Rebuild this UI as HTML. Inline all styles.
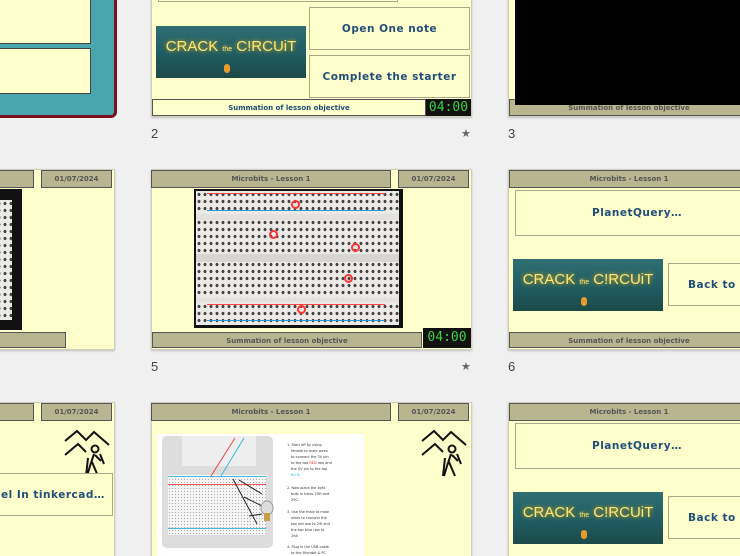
<!DOCTYPE html>
<html style="width:740px;height:556px;overflow:hidden"><head><meta charset="utf-8"><style>
*{margin:0;padding:0;box-sizing:border-box}
body{width:740px;height:556px;background:#f0f0f0;position:relative;overflow:hidden;font-family:"DejaVu Sans","Liberation Sans",sans-serif}
.a{position:absolute}
.sl{position:absolute;background:#ffffcc;border:1px solid #cfcfb8;box-shadow:0 1px 2px rgba(0,0,0,.2);overflow:hidden}
.hd{position:absolute;background:#b8b590;border:1px solid #555;color:#555;font-size:7px;font-weight:bold;text-align:center;line-height:16px}
.bx{position:absolute;border:1px solid #aaa68a;background:#ffffcc;color:#1f4e79;font-weight:bold;font-size:10.5px;display:flex;align-items:center;justify-content:center;letter-spacing:.5px}
.tm{position:absolute;background:#111;color:#3ed13e;font-family:"DejaVu Sans Mono",monospace;font-size:13px;line-height:20px;text-align:center}
.ck{position:absolute;background:linear-gradient(#2f6f74,#1f5a60 60%,#1c4a48);overflow:hidden}
.ck span{position:absolute;top:12px;left:0;width:100%;text-align:center;color:#f8e87a;font-family:"Liberation Sans Narrow","Liberation Sans",sans-serif;font-size:15px;text-shadow:0 0 4px #ffb400;letter-spacing:0}
.ck i{position:absolute;left:68px;bottom:5px;width:6px;height:9px;border-radius:3px;background:#e89a2a}
.num{position:absolute;font-size:13px;color:#444;font-family:"Liberation Sans",sans-serif}
.star{position:absolute;font-size:11px;color:#666}
.bb{position:absolute;background:#111}
.bbi{position:absolute;background:#eceae6;background-image:radial-gradient(#444 30%,transparent 38%);background-size:6px 7px}
</style></head><body>

<!-- slide 1 -->
<div class="a" style="left:-200px;top:-60px;width:317px;height:178px;background:#4aa7b0;border:3px solid #7a1020;border-radius:6px"></div>
<div class="a" style="left:-10px;top:-10px;width:101px;height:54px;background:#ffffcc;border:1px solid #444"></div>
<div class="a" style="left:-10px;top:48px;width:101px;height:46px;background:#ffffcc;border:1px solid #444"></div>

<!-- slide 2 -->
<div class="sl" style="left:151px;top:-64px;width:321px;height:181px"></div>
<div class="a" style="left:158px;top:-10px;width:240px;height:12px;border:1px solid #aaa68a"></div>
<div class="ck" style="left:156px;top:26px;width:150px;height:52px"><span>CRACK <small style="font-size:7px">the</small> C!RCUiT</span><i></i></div>
<div class="bx" style="left:309px;top:7px;width:161px;height:43px">Open One note</div>
<div class="bx" style="left:309px;top:55px;width:161px;height:43px">Complete the starter</div>
<div class="hd" style="left:152px;top:99px;width:274px;height:17px;background:#ffffcc;color:#1f4e79">Summation of lesson objective</div>
<div class="tm" style="left:426px;top:99px;width:45px;height:17px;line-height:17px">04:00</div>
<div class="num" style="left:151px;top:126px">2</div>
<div class="star" style="left:461px;top:127px">★</div>

<!-- slide 3 -->
<div class="sl" style="left:508px;top:-64px;width:260px;height:181px"></div>
<div class="hd" style="left:509px;top:99px;width:240px;height:17px">Summation of lesson objective</div>
<div class="a" style="left:515px;top:0;width:230px;height:105px;background:#000"></div>
<div class="num" style="left:508px;top:126px">3</div>

<!-- row 2 A -->
<div class="sl" style="left:-210px;top:169px;width:325px;height:181px"></div>
<div class="hd" style="left:-10px;top:170px;width:44px;height:18px"></div>
<div class="hd" style="left:41px;top:170px;width:71px;height:18px">01/07/2024</div>
<div class="bb" style="left:-10px;top:189px;width:32px;height:141px"></div>
<div class="bbi" style="left:-10px;top:200px;width:22px;height:120px"></div>
<div class="hd" style="left:-10px;top:332px;width:76px;height:16px"></div>

<!-- row 2 B -->
<div class="sl" style="left:151px;top:169px;width:321px;height:181px"></div>
<div class="hd" style="left:151px;top:170px;width:240px;height:18px">Microbits - Lesson 1</div>
<div class="hd" style="left:398px;top:170px;width:71px;height:18px">01/07/2024</div>
<div class="bb" style="left:194px;top:189px;width:209px;height:139px"></div>
<div class="bbi" style="left:196px;top:191px;width:203px;height:134px"></div>
<div class="a" style="left:196px;top:214px;width:203px;height:6px;background:#e4e2de"></div>
<div class="a" style="left:196px;top:254px;width:203px;height:8px;background:#d8d6d2"></div>
<div class="a" style="left:196px;top:298px;width:203px;height:4px;background:#e4e2de"></div>
<div class="a" style="left:207px;top:193px;width:178px;height:1px;background:#f44"></div>
<div class="a" style="left:207px;top:210px;width:178px;height:1px;background:#29c"></div>
<div class="a" style="left:207px;top:304px;width:178px;height:1px;background:#f44"></div>
<div class="a" style="left:207px;top:320px;width:178px;height:1px;background:#29c"></div>
<div class="a" style="left:291px;top:200px;width:9px;height:9px;border:2px solid #f33;border-radius:50%"></div>
<div class="a" style="left:269px;top:230px;width:9px;height:9px;border:2px solid #f33;border-radius:50%"></div>
<div class="a" style="left:351px;top:243px;width:9px;height:9px;border:2px solid #f33;border-radius:50%"></div>
<div class="a" style="left:344px;top:274px;width:9px;height:9px;border:2px solid #f33;border-radius:50%"></div>
<div class="a" style="left:297px;top:305px;width:9px;height:9px;border:2px solid #f33;border-radius:50%"></div>
<div class="hd" style="left:152px;top:332px;width:270px;height:16px">Summation of lesson objective</div>
<div class="tm" style="left:423px;top:328px;width:48px;height:20px">04:00</div>
<div class="num" style="left:151px;top:359px">5</div>
<div class="star" style="left:461px;top:360px">★</div>

<!-- row 2 C -->
<div class="sl" style="left:508px;top:169px;width:260px;height:181px"></div>
<div class="hd" style="left:509px;top:170px;width:240px;height:18px">Microbits - Lesson 1</div>
<div class="bx" style="left:515px;top:190px;width:240px;height:46px;justify-content:flex-start;padding-left:76px">PlanetQuery…</div>
<div class="ck" style="left:513px;top:259px;width:150px;height:52px"><span>CRACK <small style="font-size:7px">the</small> C!RCUiT</span><i></i></div>
<div class="bx" style="left:668px;top:263px;width:100px;height:43px;justify-content:flex-start;padding-left:19px">Back to</div>
<div class="hd" style="left:509px;top:332px;width:240px;height:16px">Summation of lesson objective</div>
<div class="num" style="left:508px;top:359px">6</div>

<!-- row 3 A -->
<div class="sl" style="left:-210px;top:402px;width:325px;height:181px"></div>
<div class="hd" style="left:-10px;top:403px;width:44px;height:18px"></div>
<div class="hd" style="left:41px;top:403px;width:71px;height:18px">01/07/2024</div>
<svg class="a" style="left:64px;top:428px" width="52" height="50" viewBox="0 0 52 50" fill="none" stroke="#111" stroke-width="2"><path d="M1 13 L13 3 L22 12 L30 4 L45 17"/><path d="M1 27 L14 16 L22 24"/><circle cx="31" cy="21" r="3.5"/><path d="M30 26 L26 38 L23 48 M28 34 L34 48 M31 27 L37 33 M36 26 L40 36 M24 30 L22 48"/></svg>
<div class="bx" style="left:-10px;top:473px;width:123px;height:43px;justify-content:flex-start;padding-left:10px">el In tinkercad…</div>

<!-- row 3 B -->
<div class="sl" style="left:151px;top:402px;width:321px;height:181px"></div>
<div class="hd" style="left:151px;top:403px;width:240px;height:18px">Microbits - Lesson 1</div>
<div class="hd" style="left:398px;top:403px;width:71px;height:18px">01/07/2024</div>
<div class="a" style="left:157px;top:434px;width:207px;height:130px;background:#fff"></div>
<div class="a" style="left:162px;top:436px;width:111px;height:112px;background:#ddd;border-radius:5px"></div>
<div class="a" style="left:182px;top:436px;width:74px;height:30px;background:#eee"></div>
<div class="a" style="left:168px;top:475px;width:98px;height:60px;background:#f4f4f4;background-image:radial-gradient(#aaa 30%,transparent 35%);background-size:3px 3px"></div>
<div class="a" style="left:168px;top:476px;width:98px;height:1px;background:#4bd"></div>
<div class="a" style="left:168px;top:484px;width:98px;height:1px;background:#f55"></div>
<div class="a" style="left:168px;top:528px;width:98px;height:1px;background:#4bd"></div>
<svg class="a" style="left:157px;top:434px" width="207" height="122"><path d="M54 42 L78 4" stroke="#e44" stroke-width="1"/><path d="M64 42 L87 4" stroke="#3bd"/><path d="M76 45 L100 90 M82 46 L105 60 M87 63 L105 72 M92 82 L105 80" stroke="#222"/><ellipse cx="110" cy="74" rx="6" ry="7" fill="#ddd" stroke="#999"/><rect x="107" y="79" width="6" height="8" fill="#c9a04a"/><text x="130" y="12" font-size="3.5" fill="#333">1. Start off by using</text><text x="134" y="18" font-size="3.5" fill="#333">female to male wires</text><text x="134" y="24" font-size="3.5" fill="#333">to connect the 3V pin</text><text x="134" y="30" font-size="3.5" fill="#333">to the top <tspan fill="#e22">RED</tspan> row and</text><text x="134" y="36" font-size="3.5" fill="#333">the 0V pin to the top</text><text x="134" y="42" font-size="3.5" fill="#3bd">BLUE</text><text x="130" y="55" font-size="3.5" fill="#333">2. Now place the light</text><text x="134" y="61" font-size="3.5" fill="#333">bulb in holes 29H and</text><text x="134" y="67" font-size="3.5" fill="#333">29C</text><text x="130" y="79" font-size="3.5" fill="#333">3. Use the male to male</text><text x="134" y="85" font-size="3.5" fill="#333">wires to connect the</text><text x="134" y="91" font-size="3.5" fill="#333">top red row to 29I and</text><text x="134" y="97" font-size="3.5" fill="#333">the top blue row to</text><text x="134" y="103" font-size="3.5" fill="#333">29A</text><text x="130" y="114" font-size="3.5" fill="#333">4. Plug in the USB cable</text><text x="134" y="120" font-size="3.5" fill="#333">to the Microbit &amp; PC</text></svg>
<svg class="a" style="left:421px;top:428px" width="52" height="50" viewBox="0 0 52 50" fill="none" stroke="#111" stroke-width="2"><path d="M1 13 L13 3 L22 12 L30 4 L45 17"/><path d="M1 27 L14 16 L22 24"/><circle cx="31" cy="21" r="3.5"/><path d="M30 26 L26 38 L23 48 M28 34 L34 48 M31 27 L37 33 M36 26 L40 36 M24 30 L22 48"/></svg>

<!-- row 3 C -->
<div class="sl" style="left:508px;top:402px;width:260px;height:181px"></div>
<div class="hd" style="left:509px;top:403px;width:240px;height:18px">Microbits - Lesson 1</div>
<div class="bx" style="left:515px;top:423px;width:240px;height:46px;justify-content:flex-start;padding-left:76px">PlanetQuery…</div>
<div class="ck" style="left:513px;top:492px;width:150px;height:52px"><span>CRACK <small style="font-size:7px">the</small> C!RCUiT</span><i></i></div>
<div class="bx" style="left:668px;top:496px;width:100px;height:43px;justify-content:flex-start;padding-left:19px">Back to</div>
</body></html>
